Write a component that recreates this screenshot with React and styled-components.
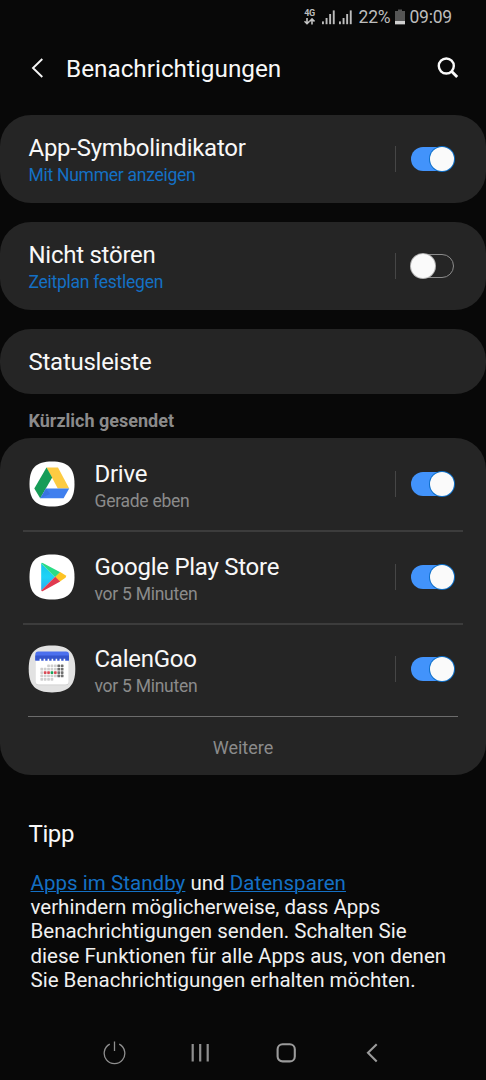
import React, { useState } from "react";
import styled, { createGlobalStyle } from "styled-components";

const recentApps = [
    { id: "drive", name: "Drive", time: "Gerade eben" },
    { id: "play", name: "Google Play Store", time: "vor 5 Minuten" },
    { id: "calengoo", name: "CalenGoo", time: "vor 5 Minuten" },
];

const SQUIRCLE = "M24 1.5C40 1.5 46.5 8 46.5 24S40 46.5 24 46.5 1.5 40 1.5 24 8 1.5 24 1.5Z";

const DriveIcon = () => (
    <svg width="48" height="48" viewBox="0 0 48 48">
        <path d={SQUIRCLE} fill="#fff" />
        <path d="M18.5 7.6H30L41.2 28.4H29.8Z" fill="#fdcb42" />
        <path d="M18.5 7.6L6.3 28.4L12.2 38.3L24.2 17.5Z" fill="#169c58" />
        <path d="M17.9 28.4H41.2L35.6 38.3H12.2Z" fill="#3f7fee" />
        <path d="M12.2 38.3L17.9 28.4L22 34Z" fill="#3569d4" opacity="0.5" />
    </svg>
);

const PlayIcon = () => (
    <svg width="48" height="48" viewBox="0 0 48 48">
        <defs>
            <linearGradient id="playBlue" x1="0" y1="0" x2="0" y2="1">
                <stop offset="0" stopColor="#16c5e8" />
                <stop offset="0.5" stopColor="#1fd3f7" />
                <stop offset="1" stopColor="#2caaf2" />
            </linearGradient>
        </defs>
        <path d={SQUIRCLE} fill="#fff" />
        <path d="M13.2 10.2V37.6L27 24Z" fill="url(#playBlue)" />
        <path d="M13.2 10.2Q13.6 9.3 14.8 10L32.3 19.2L27.2 24.2Z" fill="#2bdc85" />
        <path d="M32.2 19.1L37.4 22.3Q39 23.5 37.4 24.8L32 28.6L27.2 24Z" fill="#fdc323" />
        <path d="M13.2 37.6Q13.8 38.7 15 37.9L32.2 28.5L27.2 23.8Z" fill="#e03a50" />
    </svg>
);

// [column, row, colour] for every day in the little month sheet
const calendarDays = [];
for (let row = 0; row < 5; row++) {
    for (let col = 0; col < 7; col++) {
        if (row === 0 && col < 2) continue;
        if (row === 4 && col > 3) continue;
        let color = col > 4 ? "#707070" : "#cfcfcf";
        if (row === 2 && (col === 1 || col === 2 || col === 4)) color = "#d84a55";
        if (row === 2 && col === 3) color = "#18a35a";
        calendarDays.push([col, row, color]);
    }
}

const CalendarIcon = () => (
    <svg width="48" height="48" viewBox="0 0 48 48">
        <path d="M24 0.6C40.5 0.6 47.3 7.5 47.3 24S40.5 47.4 24 47.4 0.7 40.5 0.7 24 7.5 0.6 24 0.6Z" fill="#e2e2e2" />
        <rect x="7.6" y="8.5" width="33" height="31.8" rx="3" fill="#cacaca" />
        <rect x="7.6" y="8" width="33" height="31.4" rx="3" fill="#fff" />
        <path d="M7.3 15.5V9.6Q7.3 6.6 10.3 6.6H38Q41 6.6 41 9.6V15.5Z" fill="#4c70ee" />
        <path d="M7.3 10.5H41V15.5H7.3Z" fill="#3555cc" />
        <path d="M11.6 14.8H38" stroke="#fff" strokeWidth="2.2" strokeDasharray="1.6 2.4" />
        {calendarDays.map(([col, row, color]) => (
            <rect key={`${col}-${row}`} x={12.4 + col * 3.4} y={19.4 + row * 3.4} width="2.7" height="2.7" rx="0.6" fill={color} />
        ))}
    </svg>
);

const appIcons = { drive: DriveIcon, play: PlayIcon, calengoo: CalendarIcon };

const SignalIcon = () => (
    <svg width="13" height="15" viewBox="0 0 13 15" fill="#bdbdbd">
        <rect x="0" y="11.4" width="1.9" height="2.8" />
        <rect x="3.6" y="8" width="1.9" height="6.2" />
        <rect x="7.2" y="4" width="1.9" height="10.2" />
        <rect x="10.8" y="0.4" width="1.9" height="13.8" />
    </svg>
);

const Toggle = ({ on, onClick }) => (
    <ToggleTrack type="button" role="switch" aria-checked={on} $on={on} onClick={onClick}>
        <ToggleKnob $on={on} />
    </ToggleTrack>
);

const App = () => {
    const [enabled, setEnabled] = useState({
        badge: true,
        dnd: false,
        drive: true,
        play: true,
        calengoo: true,
    });

    const toggle = (key) => {
        setEnabled({ ...enabled, [key]: !enabled[key] });
    };

    return (
        <>
            <GlobalStyle />
            <Screen>
                <StatusBar>
                    <Network>
                        <span>4G</span>
                        <svg width="11" height="7" viewBox="0 0 11 7" fill="none" stroke="#c4c4c4" strokeWidth="1.6">
                            <path d="M3 0V5.6M0.5 3.2L3 5.7L5.5 3.2" />
                            <path d="M8 6.6V1M5.5 3.5L8 1L10.5 3.5" />
                        </svg>
                    </Network>
                    <SignalIcon />
                    <SignalIcon />
                    <Percent>22%</Percent>
                    <svg width="10" height="16" viewBox="0 0 10 16">
                        <path d="M3 0.5H7V2H10V15.3H0V2H3Z" fill="#555" />
                        <rect y="12" width="10" height="3.3" fill="#d0d0d0" />
                    </svg>
                    <Clock>09:09</Clock>
                </StatusBar>

                <Header>
                    <svg width="12" height="20" viewBox="0 0 12 20" fill="none" stroke="#f5f5f5" strokeWidth="1.9">
                        <path d="M11.3 1L2 10L11.3 19" />
                    </svg>
                    <Title>Benachrichtigungen</Title>
                    <svg width="22" height="22" viewBox="0 0 22 22" fill="none" stroke="#fafafa" strokeWidth="2.4">
                        <circle cx="9.3" cy="9" r="7.5" />
                        <path d="M14.5 14.3L20.2 20" strokeWidth="2.9" />
                    </svg>
                </Header>

                <Card>
                    <SettingRow>
                        <RowText>
                            <RowTitle>App-Symbolindikator</RowTitle>
                            <RowLink>Mit Nummer anzeigen</RowLink>
                        </RowText>
                        <Separator />
                        <Toggle on={enabled.badge} onClick={() => toggle("badge")} />
                    </SettingRow>
                </Card>

                <Card>
                    <SettingRow>
                        <RowText>
                            <RowTitle>Nicht stören</RowTitle>
                            <RowLink>Zeitplan festlegen</RowLink>
                        </RowText>
                        <Separator />
                        <Toggle on={enabled.dnd} onClick={() => toggle("dnd")} />
                    </SettingRow>
                </Card>

                <Card>
                    <SettingRow $single>
                        <RowTitle>Statusleiste</RowTitle>
                    </SettingRow>
                </Card>

                <SectionLabel>Kürzlich gesendet</SectionLabel>

                <AppCard>
                    {recentApps.map((app, index) => {
                        const Icon = appIcons[app.id];
                        const last = index === recentApps.length - 1;
                        return (
                            <React.Fragment key={app.id}>
                                <AppRow $last={last}>
                                    <Icon />
                                    <AppText>
                                        <RowTitle>{app.name}</RowTitle>
                                        <AppTime>{app.time}</AppTime>
                                    </AppText>
                                    <Separator />
                                    <Toggle on={enabled[app.id]} onClick={() => toggle(app.id)} />
                                </AppRow>
                                <Divider $last={last} />
                            </React.Fragment>
                        );
                    })}
                    <MoreButton type="button">Weitere</MoreButton>
                </AppCard>

                <TipSection>
                    <TipTitle>Tipp</TipTitle>
                    <TipText>
                        <TipLink href="#">Apps im Standby</TipLink> und <TipLink href="#">Datensparen</TipLink>
                        <br />
                        verhindern möglicherweise, dass Apps
                        <br />
                        Benachrichtigungen senden. Schalten Sie
                        <br />
                        diese Funktionen für alle Apps aus, von denen
                        <br />
                        Sie Benachrichtigungen erhalten möchten.
                    </TipText>
                </TipSection>

                <NavBar>
                    <NavItem>
                        <svg width="24" height="26" viewBox="0 0 24 26" fill="none" stroke="#8f8f8f" strokeWidth="1.3">
                            <path d="M7.8 4.2A10.3 10.3 0 1 0 17.2 4.2M12.5 1.6V11" />
                        </svg>
                    </NavItem>
                    <NavItem>
                        <svg width="20" height="26" viewBox="0 0 20 26" fill="none" stroke="#8f8f8f" strokeWidth="2.2">
                            <path d="M2.7 4V21.4M10.2 4V21.4M17.7 4V21.4" />
                        </svg>
                    </NavItem>
                    <NavItem>
                        <svg width="20" height="26" viewBox="0 0 20 26" fill="none" stroke="#9b9b9b" strokeWidth="2.1">
                            <rect x="1.6" y="4.2" width="17.2" height="17.2" rx="5" />
                        </svg>
                    </NavItem>
                    <NavItem>
                        <svg width="12" height="26" viewBox="0 0 12 26" fill="none" stroke="#9b9b9b" strokeWidth="2.1">
                            <path d="M10.7 4.2L2 12.8L10.7 21.4" />
                        </svg>
                    </NavItem>
                </NavBar>
            </Screen>
        </>
    );
};

const GlobalStyle = createGlobalStyle`
    * {
        box-sizing: border-box;
    }

    body {
        margin: 0;
        background-color: #080808;
        font-family: Roboto, "Liberation Sans", sans-serif;
    }

    svg {
        display: block;
        flex-shrink: 0;
    }
`;

const Screen = styled.div`
    display: flex;
    flex-direction: column;
    width: 486px;
    height: 1080px;
    overflow: hidden;
    color: #f8f8f8;
    background-color: #080808;
`;

const StatusBar = styled.div`
    display: flex;
    align-items: center;
    justify-content: flex-end;
    gap: 4.5px;
    height: 34px;
    padding-right: 34px;
    font-size: 17.5px;
    letter-spacing: -0.2px;
    color: #bdbdbd;
`;

const Network = styled.div`
    display: flex;
    flex-direction: column;
    align-items: center;
    gap: 1px;
    margin-right: 2px;
    font-size: 9px;
    font-weight: 700;
    line-height: 8px;
    letter-spacing: -0.3px;
`;

const Percent = styled.span`
    margin-left: 2px;
`;

const Clock = styled.span``;

const Header = styled.header`
    display: flex;
    align-items: center;
    height: 81px;
    padding: 0 27px 14px 31px;
`;

const Title = styled.h1`
    flex: 1;
    margin: 2px 0 0 23px;
    font-size: 24.3px;
    font-weight: 400;
    line-height: 30px;
`;

const Card = styled.section`
    flex-shrink: 0;
    border-radius: 31px;
    background-color: #252525;

    & + & {
        margin-top: 19px;
    }
`;

const AppCard = styled(Card)`
    padding-top: 1px;
`;

const SettingRow = styled.div`
    display: flex;
    align-items: center;
    height: ${(props) => (props.$single ? "65px" : "88px")};
    padding: ${(props) => (props.$single ? "1px 32px 0 28.5px" : "0 32px 0 28.5px")};
`;

const RowText = styled.div`
    flex: 1;
    display: flex;
    flex-direction: column;
    padding-top: 2px;
`;

const RowTitle = styled.div`
    font-size: 24px;
    line-height: 30px;
    letter-spacing: -0.26px;
`;

const RowLink = styled.div`
    font-size: 17.5px;
    line-height: 24px;
    letter-spacing: -0.27px;
    color: #1470c4;
`;

const Separator = styled.div`
    width: 1px;
    height: 26px;
    margin-right: 15px;
    background-color: #464646;
`;

const ToggleTrack = styled.button`
    display: flex;
    align-items: center;
    justify-content: ${(props) => (props.$on ? "flex-end" : "flex-start")};
    width: 43px;
    height: 24px;
    padding: 0 0.5px 0 0;
    border: ${(props) => (props.$on ? "none" : "1px solid #8c8c8c")};
    border-radius: 12px;
    background-color: ${(props) => (props.$on ? "#4293fb" : "transparent")};
    cursor: pointer;
`;

const ToggleKnob = styled.span`
    flex-shrink: 0;
    width: 24px;
    height: 24px;
    margin-left: ${(props) => (props.$on ? "0" : "-1px")};
    border-radius: 50%;
    background-color: #fafafa;
    box-shadow: 0 0 0 1px ${(props) => (props.$on ? "#0c6fc9" : "#b5b5b5")};
`;

const SectionLabel = styled.h2`
    height: 44px;
    margin: 0;
    padding: 15px 28.5px 0;
    font-size: 18px;
    font-weight: 700;
    line-height: 24px;
    color: #8b8b8b;
`;

const AppRow = styled.div`
    display: flex;
    align-items: center;
    height: 91px;
    padding: 0 32px ${(props) => (props.$last ? "3px" : "1px")} 28px;
`;

const AppText = styled(RowText)`
    margin-left: 18.5px;
    padding-top: 3px;
`;

const AppTime = styled.div`
    font-size: 17.5px;
    line-height: 24px;
    letter-spacing: -0.27px;
    color: #8b8b8b;
`;

const Divider = styled.div`
    height: ${(props) => (props.$last ? "1px" : "2px")};
    margin: ${(props) => (props.$last ? "0 28px" : "0 23px")};
    background-color: ${(props) => (props.$last ? "#6c6c6c" : "#3c3c3c")};
`;

const MoreButton = styled.button`
    display: block;
    width: 100%;
    height: 58px;
    padding: 3px 0 0;
    border: none;
    background: none;
    font-family: inherit;
    font-size: 18px;
    color: #8b8b8b;
`;

const TipSection = styled.section`
    flex: 1;
    padding: 44px 28.5px 0;
`;

const TipTitle = styled.h2`
    margin: 0;
    font-size: 24px;
    font-weight: 400;
    line-height: 30px;
    letter-spacing: -0.4px;
`;

const TipText = styled.p`
    margin: 22px 0 0 2px;
    font-size: 20.5px;
    line-height: 24.2px;
    white-space: nowrap;
    color: #f0f0f0;
`;

const TipLink = styled.a`
    color: #1470c4;
    letter-spacing: 0.05px;
    text-decoration-thickness: 1px;
`;

const NavBar = styled.nav`
    display: flex;
    height: 55px;
    padding: 0 71px;
`;

const NavItem = styled.div`
    flex: 1;
    display: flex;
    align-items: center;
    justify-content: center;
`;

export default App;
